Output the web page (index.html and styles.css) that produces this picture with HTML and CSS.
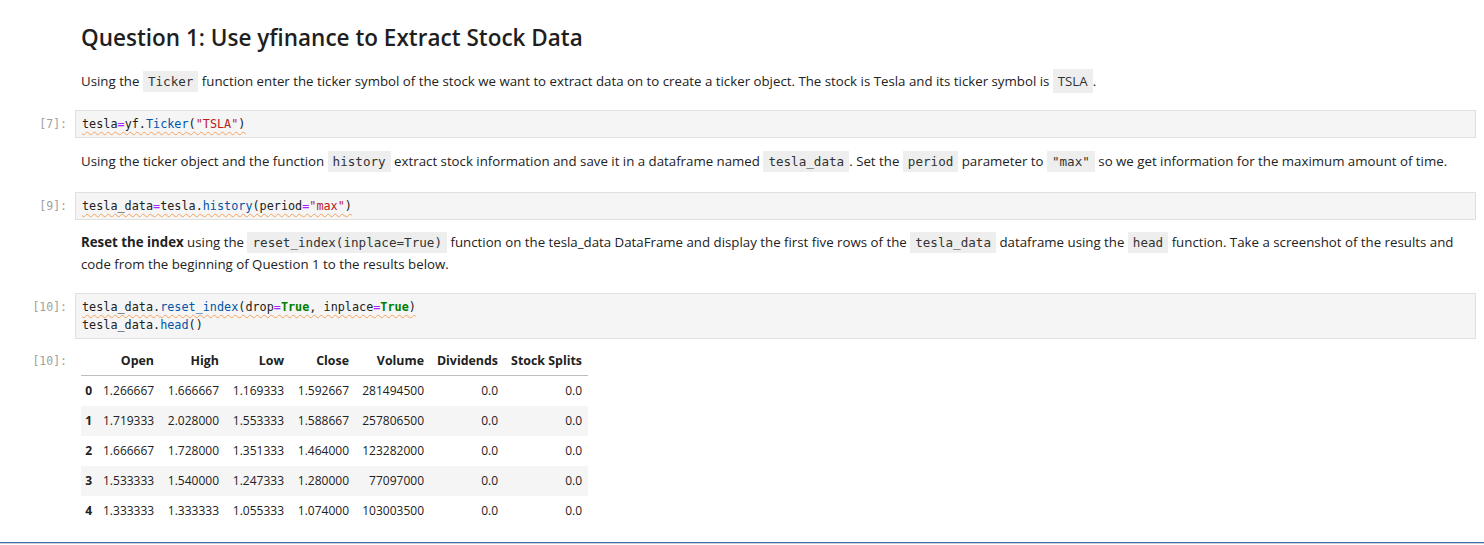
FILE: index.html
```html
<!DOCTYPE html>
<html lang="en">
<head>
<meta charset="utf-8">
<title>Question 1</title>
<link rel="stylesheet" href="styles.css">
</head>
<body>
<div class="notebook">
  <div class="cell md-cell heading-cell">
    <div class="prompt"></div>
    <div class="content"><h2 class="title">Question 1: Use yfinance to Extract Stock Data</h2></div>
  </div>

  <div class="cell md-cell gap-md">
    <div class="prompt"></div>
    <div class="content"><p class="text">Using the <code class="ic">Ticker</code> function enter the ticker symbol of the stock we want to extract data on to create a ticker object. The stock is Tesla and its ticker symbol is <code class="ic ic-sans">TSLA</code>.</p></div>
  </div>

  <div class="cell code-cell gap-code">
    <div class="prompt">[7]:</div>
    <div class="content"><pre class="editor"><span class="lint">tesla<span class="op">=</span>yf.<span class="prop">Ticker</span>(<span class="str">"TSLA"</span>)</span></pre></div>
  </div>

  <div class="cell md-cell gap-md-after">
    <div class="prompt"></div>
    <div class="content"><p class="text">Using the ticker object and the function <code class="ic">history</code> extract stock information and save it in a dataframe named <code class="ic">tesla_data</code>. Set the <code class="ic">period</code> parameter to <code class="ic">"max"</code> so we get information for the maximum amount of time.</p></div>
  </div>

  <div class="cell code-cell gap-code2">
    <div class="prompt">[9]:</div>
    <div class="content"><pre class="editor"><span class="lint">tesla_data<span class="op">=</span>tesla.<span class="prop">history</span>(period<span class="op">=</span><span class="str">"max"</span>)</span></pre></div>
  </div>

  <div class="cell md-cell gap-md2">
    <div class="prompt"></div>
    <div class="content"><p class="text"><strong>Reset the index</strong> using the <code class="ic">reset_index(inplace=True)</code> function on the tesla_data DataFrame and display the first five rows of the <code class="ic">tesla_data</code> dataframe using the <code class="ic">head</code> function. Take a screenshot of the results and code from the beginning of Question 1 to the results below.</p></div>
  </div>

  <div class="cell code-cell gap-code">
    <div class="prompt">[10]:</div>
    <div class="content"><pre class="editor"><span class="lint">tesla_data.<span class="prop">reset_index</span>(drop<span class="op">=</span><span class="kw">True</span>, inplace<span class="op">=</span><span class="kw">True</span>)</span>
tesla_data.<span class="prop">head</span>()</pre></div>
  </div>

  <div class="cell out-cell">
    <div class="prompt out-prompt">[10]:</div>
    <div class="content">
      <table class="df">
        <colgroup>
          <col class="c-idx"><col class="c-num"><col class="c-num2"><col class="c-num2"><col class="c-num2"><col class="c-vol"><col class="c-div"><col class="c-split">
        </colgroup>
        <thead>
          <tr><th></th><th>Open</th><th>High</th><th>Low</th><th>Close</th><th>Volume</th><th>Dividends</th><th>Stock Splits</th></tr>
        </thead>
        <tbody>
          <tr><th>0</th><td>1.266667</td><td>1.666667</td><td>1.169333</td><td>1.592667</td><td>281494500</td><td>0.0</td><td>0.0</td></tr>
          <tr><th>1</th><td>1.719333</td><td>2.028000</td><td>1.553333</td><td>1.588667</td><td>257806500</td><td>0.0</td><td>0.0</td></tr>
          <tr><th>2</th><td>1.666667</td><td>1.728000</td><td>1.351333</td><td>1.464000</td><td>123282000</td><td>0.0</td><td>0.0</td></tr>
          <tr><th>3</th><td>1.533333</td><td>1.540000</td><td>1.247333</td><td>1.280000</td><td>77097000</td><td>0.0</td><td>0.0</td></tr>
          <tr><th>4</th><td>1.333333</td><td>1.333333</td><td>1.055333</td><td>1.074000</td><td>103003500</td><td>0.0</td><td>0.0</td></tr>
        </tbody>
      </table>
    </div>
  </div>
</div>
<div class="footer-line"></div>
</body>
</html>
```

FILE: styles.css
```css
html, body {
  margin: 0;
  padding: 0;
  background: #ffffff;
}

body {
  font-family: "Open Sans", "Noto Sans", sans-serif;
  color: #212121;
  width: 1484px;
  height: 545px;
  overflow: hidden;
  position: relative;
}

.notebook {
  padding-top: 22px;
  padding-right: 8px;
}

.cell {
  display: grid;
  grid-template-columns: 75px 1fr;
}

.prompt {
  font-family: "DejaVu Sans Mono", "Liberation Mono", monospace;
  font-size: 11.5px;
  color: #a0a0a0;
  text-align: right;
  padding-right: 8px;
  line-height: 18px;
  padding-top: 5px;
}

.md-cell .content {
  padding-left: 6px;
}

.title {
  margin: 0;
  font-size: 22.5px;
  font-weight: 600;
  line-height: 32px;
  color: #1f1f1f;
}

.text {
  margin: 0;
  font-size: 13.28px;
  line-height: 22px;
  color: #222222;
  padding-right: 20px;
}

.text strong {
  font-weight: 700;
}

.ic {
  font-family: "DejaVu Sans Mono", "Liberation Mono", monospace;
  font-size: 12.6px;
  line-height: 1;
  background: #eeeeee;
  padding: 3px 5px;
  color: #333333;
}

.ic-sans {
  font-family: "Open Sans", "Noto Sans", sans-serif;
  font-size: 13.25px;
}

.gap-md { margin-top: 16px; }
.gap-md-after { margin-top: 12px; }
.gap-md2 { margin-top: 11px; }
.gap-code { margin-top: 18px; }
.gap-code2 { margin-top: 20px; }

.editor {
  margin: 0;
  background: #f5f5f5;
  border: 1px solid #e0e0e0;
  padding: 4px 6px;
  font-family: "DejaVu Sans Mono", "Liberation Mono", monospace;
  font-size: 11.8px;
  line-height: 18px;
  color: #212121;
}

.lint {
  text-decoration: underline wavy #f5a35c;
  text-decoration-thickness: 1px;
  text-underline-offset: 3px;
  text-decoration-skip-ink: none;
}

.op { color: #aa22ff; }
.prop { color: #0055aa; }
.str { color: #ba2121; }
.kw { color: #008000; font-weight: bold; }

.out-cell {
  margin-top: 7px;
}

.out-prompt {
  padding-top: 6px;
}

.out-cell .content {
  padding-left: 6px;
}

.df {
  border-collapse: collapse;
  table-layout: fixed;
  width: 507px;
  font-family: "Open Sans", "Noto Sans", sans-serif;
  font-size: 12px;
  color: #212121;
}

.c-idx { width: 16px; }
.c-num { width: 63px; }
.c-num2 { width: 65px; }
.c-vol { width: 75px; }
.c-div { width: 74px; }
.c-split { width: 84px; }

.df th,
.df td {
  text-align: right;
  padding: 6px 6px;
  line-height: 18px;
  white-space: nowrap;
  border: none;
}

.df thead th {
  font-weight: 700;
  font-size: 12.4px;
  border-bottom: 1px solid #bdbdbd;
  padding-bottom: 5px;
}

.df tbody th {
  font-weight: 700;
  padding-left: 2px;
  padding-right: 5px;
}

.df tbody tr:nth-child(even) {
  background: #f5f5f5;
}

.footer-line {
  position: absolute;
  left: 0;
  right: 0;
  top: 542px;
  height: 1px;
  background: #3d6fb0;
  border-bottom: 1px solid #cfcfcf;
}
```
